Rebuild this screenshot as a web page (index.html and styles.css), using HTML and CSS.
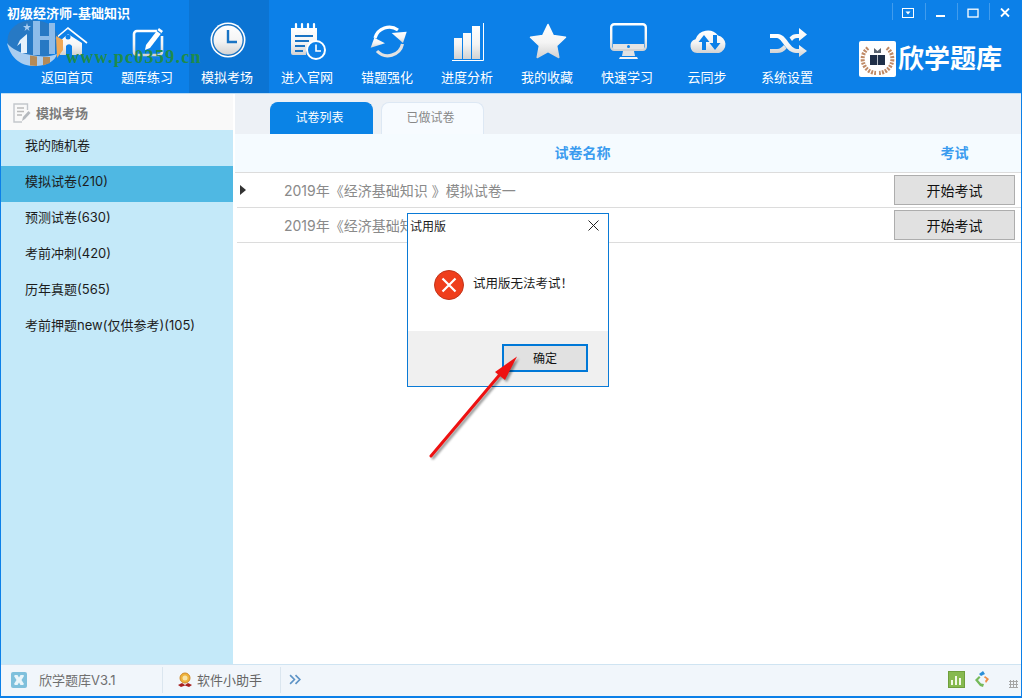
FILE: index.html
```html
<!DOCTYPE html>
<html lang="zh">
<head>
<meta charset="utf-8">
<title>初级经济师-基础知识</title>
<link rel="stylesheet" href="styles.css">
</head>
<body>
<svg class="defs" width="0" height="0" aria-hidden="true">
  <defs>
    <linearGradient id="g" x1="0" y1="0" x2="0" y2="1">
      <stop offset="0" stop-color="#ffffff"/>
      <stop offset="0.55" stop-color="#f4f4f4"/>
      <stop offset="1" stop-color="#d2d2d2"/>
    </linearGradient>
  </defs>
</svg>
<div class="window">
  <header class="top">
    <nav class="tools">
      <a class="tool">
        <svg class="ico" viewBox="0 0 48 40"><path d="M15 33V19L23 12L37 21V33H27V24A3.500 3.500 0 0 0 21 24V33Z" fill="url(#g)"/><path d="M5 21L23 6L42 21" fill="none" stroke="#fff" stroke-width="1.600"/><circle cx="23" cy="15" r="2.500" fill="#0c80e8"/></svg>
        <span>返回首页</span>
      </a>
      <a class="tool">
        <svg class="ico" viewBox="0 0 48 40"><path d="M32 9H12A3 3 0 0 0 9 12V30A3 3 0 0 0 12 33H34A3 3 0 0 0 37 30V14" fill="none" stroke="url(#g)" stroke-width="2.600"/><path d="M21 23L34 6L38 9L25 26L20 28Z" fill="#fff"/><path d="M32 8.500L36 11.500" stroke="#0c80e8" stroke-width="1.200"/></svg>
        <span>题库练习</span>
      </a>
      <a class="tool active">
        <svg class="ico" viewBox="0 0 48 40"><circle cx="23" cy="18" r="17.500" fill="#fff"/><circle cx="23" cy="18" r="15.200" fill="url(#g)" stroke="#1a74c4" stroke-width="1.400"/><path d="M23 8V20H32" fill="none" stroke="#1a74c4" stroke-width="2.400"/></svg>
        <span>模拟考场</span>
      </a>
      <a class="tool">
        <svg class="ico" viewBox="0 0 48 40"><path d="M6 6H32V21A11 11 0 0 0 21 33H8A2 2 0 0 1 6 31Z" fill="url(#g)"/><path d="M11 2V9M17 2V9M23 2V9M29 2V9" stroke="#fff" stroke-width="2.200" stroke-linecap="round"/><path d="M10 14H28M10 19H24M10 24H20M10 29H18" stroke="#1a74c4" stroke-width="2"/><circle cx="31" cy="28" r="9" fill="#0c80e8" stroke="#fff" stroke-width="2"/><path d="M31 22.500V29H36" fill="none" stroke="#fff" stroke-width="1.600"/></svg>
        <span>进入官网</span>
      </a>
      <a class="tool">
        <svg class="ico" viewBox="0 0 48 40"><path d="M10 16A15 15 0 0 1 33 8" fill="none" stroke="#fff" stroke-width="3.200"/><path d="M26.700 11L41.700 9.700L38 21Z" fill="url(#g)"/><path d="M37.500 22A15 15 0 0 1 12 29" fill="none" stroke="#e2e2e2" stroke-width="3.200"/><path d="M5.700 25.700L9.300 15.700L20 21.300Z" fill="url(#g)"/></svg>
        <span>错题强化</span>
      </a>
      <a class="tool">
        <svg class="ico" viewBox="0 0 48 40"><path d="M9 16H17V37H9ZM18 11H26V37H18ZM27 4H35V37H27Z" fill="url(#g)"/><path d="M38.500 1V38.500H7" fill="none" stroke="#fff" stroke-width="1"/></svg>
        <span>进度分析</span>
      </a>
      <a class="tool">
        <svg class="ico" viewBox="0 0 48 40"><path d="M23 2.500L28.300 13.500L40.500 15.200L31.600 23.700L33.800 35.500L23 29.700L12.200 35.500L14.400 23.700L5.500 15.200L17.700 13.500Z" fill="url(#g)" stroke="url(#g)" stroke-width="1.500" stroke-linejoin="round"/></svg>
        <span>我的收藏</span>
      </a>
      <a class="tool">
        <svg class="ico" viewBox="0 0 48 40"><rect x="6.200" y="2.200" width="34.600" height="25.600" rx="3" fill="#0c80e8" stroke="url(#g)" stroke-width="2.400"/><path d="M8 22H39V26A1 1 0 0 1 38 27H9A1 1 0 0 1 8 26Z" fill="#e4e4e4"/><circle cx="23.500" cy="24.500" r="1.500" fill="#0c80e8"/><path d="M18 29H29L30 34H17Z" fill="#e2e2e2"/><path d="M15 35H32L33 37H14Z" fill="#f4f4f4"/></svg>
        <span>快速学习</span>
      </a>
      <a class="tool">
        <svg class="ico" viewBox="0 0 48 40"><path d="M12 31A7 7 0 0 1 10.500 17.300A13 13 0 0 1 33 13.500A9 9 0 0 1 34 31Z" fill="url(#g)"/><path d="M19 13L13.500 20H17V28H21V20H24.500Z" fill="#0c80e8"/><path d="M30 28L35.500 21H32V13H28V21H24.500Z" fill="#0c80e8"/></svg>
        <span>云同步</span>
      </a>
      <a class="tool">
        <svg class="ico" viewBox="0 0 48 40"><path d="M5 12H13C21 12 25 27 32 27H34V23L42 29L34 35V31H31C21 31 17 16 12 16H5Z" fill="url(#g)"/><path d="M5 27H12C15 27 17 25 19 23L21.500 26.500C19 29.500 16 31 12 31H5ZM24.500 15.500C26.500 13 29 12 32 12H34V6L42 12.500L34 19V16H32C30 16 28.500 17 27 19Z" fill="url(#g)"/></svg>
        <span>系统设置</span>
      </a>
    </nav>
    <div class="brand">
      <svg class="brand-ico" viewBox="0 0 37 36">
        <rect width="37" height="36" rx="2" fill="#fff"/>
        <path d="M9 7A14 14 0 0 0 17 32M28 7A14 14 0 0 1 20 32" fill="none" stroke="#c08a66" stroke-width="4" stroke-dasharray="2 1.200"/>
        <path d="M11 14H26V24H11Z" fill="#1f2f48"/>
        <path d="M18.500 14V24" stroke="#dfe4ea" stroke-width="0.800"/>
        <path d="M15 7L18.500 10L22 7V12H15Z" fill="#59636f"/>
      </svg>
      <span class="brand-name">欣学题库</span>
    </div>
    <div class="controls">
      <i class="ctl ctl-first"><svg viewBox="0 0 12 10" class="ctl-ico"><rect x="0.500" y="0.500" width="11" height="9" fill="none" stroke="#fff"/><path d="M3.500 3.500H8.500L6 6.500Z" fill="#fff"/></svg></i>
      <i class="ctl"><svg viewBox="0 0 12 10" class="ctl-ico"><path d="M1 8H10" stroke="#fff" stroke-width="2"/></svg></i>
      <i class="ctl"><svg viewBox="0 0 12 10" class="ctl-ico"><rect x="1" y="1.200" width="10" height="7.800" fill="none" stroke="#fff" stroke-width="1.300"/></svg></i>
      <i class="ctl"><svg viewBox="0 0 12 10" class="ctl-ico"><path d="M2 0.500L10 8.500M10 0.500L2 8.500" stroke="#fff" stroke-width="1.800"/></svg></i>
    </div>
    <div class="app-title">初级经济师-基础知识</div>
    <svg class="wm-logo" viewBox="0 0 56 48">
      <ellipse cx="26" cy="20" rx="25.500" ry="20" fill="#2a78c0" fill-opacity="0.9"/>
      <path d="M49 16L56 20V30L50 38Z" fill="#f0a855"/>
      <path d="M0 23C4 40 16 47 30 46C41 45 48 41 50 34C43 37 34 37 24 35C13 33 5 29 0 23Z" fill="#a9cdf0"/>
      <path d="M23 35.500L30 36.500V46L23 45.500ZM36 37H43V43L36 45.500Z" fill="#b48a57"/>
      <path d="M26 1H33V35H26ZM42 3H48V34H42ZM33 16H42V20H33Z" fill="#8dbcea"/>
      <path d="M13 20L20 14V33H14V23L10 26Z" fill="#e6f2fc"/>
      <path d="M20 3L21 6H24L21.500 8L22.500 11L20 9L17.500 11L18.500 8L16 6H19Z" fill="#a9cdf0"/>
    </svg>
    <div class="wm-text">www.pc0359.cn</div>
  </header>

  <div class="body">
    <aside class="side">
      <div class="side-head">
        <svg class="side-ico" viewBox="0 0 18 20"><path d="M14.500 7V1H1V19H9" fill="none" stroke="#c3c7cc" stroke-width="1.400"/><path d="M4 5H11M4 8.500H11M4 12H9" stroke="#bbb" stroke-width="1.300"/><path d="M9 18L10 14L15.500 8L17.500 10L12 16Z" fill="#b5b9be"/></svg>
        <span>模拟考场</span>
      </div>
      <ul class="side-list">
        <li>我的随机卷</li>
        <li class="on">模拟试卷(210)</li>
        <li>预测试卷(630)</li>
        <li>考前冲刺(420)</li>
        <li>历年真题(565)</li>
        <li>考前押题new(仅供参考)(105)</li>
      </ul>
    </aside>
    <main class="main">
      <div class="tabs">
        <div class="tab tab-on">试卷列表</div>
        <div class="tab">已做试卷</div>
      </div>
      <div class="table">
        <div class="row thead">
          <div class="c-name">试卷名称</div>
          <div class="c-act">考试</div>
        </div>
        <div class="row">
          <div class="c-mark"><i class="tri"></i></div>
          <div class="c-name c-text">2019年《经济基础知识 》模拟试卷一</div>
          <div class="c-act"><button class="start">开始考试</button></div>
        </div>
        <div class="row">
          <div class="c-mark"></div>
          <div class="c-name c-text">2019年《经济基础知识 》模拟试卷二</div>
          <div class="c-act"><button class="start">开始考试</button></div>
        </div>
      </div>
    </main>
  </div>

  <footer class="status">
    <div class="st st-a">
      <svg class="st-ico" viewBox="0 0 16 16"><rect width="16" height="16" rx="2" fill="#7fc0dc"/><path d="M4 3H6.500L8 5.500L9.500 3H12.500L13 4L10.500 8L13 12L12 13H9.500L8 10.500L6.500 13H4L3 12L5.500 8L3 4Z" fill="#eaf5fa"/></svg>
      <span>欣学题库V3.1</span>
    </div>
    <div class="st st-b">
      <svg class="st-med" viewBox="0 0 16 16"><circle cx="8" cy="6" r="5" fill="#eeb43c" stroke="#d08a2a"/><circle cx="8" cy="6" r="2.500" fill="#f9e4a6"/><path d="M1 13L5 11L8 13L11 11L15 13L12 15L8 13.500L4 15Z" fill="#a8201f"/></svg>
      <span>软件小助手</span>
    </div>
    <div class="st st-c">
      <svg class="st-more" viewBox="0 0 12 10"><path d="M1 1L5 5L1 9M6 1L10 5L6 9" fill="none" stroke="#5d93c6" stroke-width="1.500"/></svg>
    </div>
    <div class="st-right">
      <svg class="st-chart" viewBox="0 0 17 17"><rect x="0.500" y="0.500" width="16" height="16" fill="#86b94f" stroke="#6f9f3c"/><path d="M3 14V9H5V14ZM7 14V5H9V14ZM11 14V7H13V14Z" fill="#f2f8e8"/></svg>
      <svg class="st-color" viewBox="0 0 17 17"><path d="M5 3L9 0L11 3L7 5Z" fill="#2b8fd8"/><path d="M11 5L15 8L12 12L11 10L12.500 8L10 6.500Z" fill="#ee8e46"/><path d="M5 5L1 9L6 15L9 16L10 13L7 12.500L4 9L6.500 6.500Z" fill="#75b95a"/></svg>
      <i class="grip"></i>
    </div>
  </footer>

  <div class="dialog">
    <div class="dlg-head">
      <span>试用版</span>
      <svg class="dlg-x" viewBox="0 0 11 11"><path d="M0.500 0.500L10.500 10.500M10.500 0.500L0.500 10.500" stroke="#222" stroke-width="1"/></svg>
    </div>
    <div class="dlg-body">
      <svg class="dlg-err" viewBox="0 0 30 30"><circle cx="15" cy="15" r="14.500" fill="#ef3e1c" stroke="#c1351b"/><path d="M8.500 8.500L21.500 21.500M21.500 8.500L8.500 21.500" stroke="#fff" stroke-width="2.200"/></svg>
      <span>试用版无法考试！</span>
    </div>
    <div class="dlg-foot"><button class="ok">确定</button></div>
  </div>

  <svg class="pointer" viewBox="0 0 110 120">
    <path d="M11 111L82 27" stroke="#ee1111" stroke-width="3" stroke-linecap="round"/>
    <path d="M97 11.500L75 27L85 35Z" fill="#ee1111"/>
  </svg>
</div>
</body>
</html>
```

FILE: styles.css
```css
* { box-sizing: border-box; }
html, body { margin: 0; padding: 0; }
body {
  width: 1022px;
  height: 698px;
  overflow: hidden;
  background: #fff;
  font-family: Inter, "Noto Sans CJK SC", sans-serif;
  font-size: 13px;
}
.defs { position: absolute; }
.window {
  position: relative;
  width: 1022px;
  height: 698px;
  display: flex;
  flex-direction: column;
  border: 1px solid #0c80e8;
  border-top: 0;
  background: #fff;
}

/* header */
.top {
  position: relative;
  flex: 0 0 93px;
  display: flex;
  background: #0c80e8;
  color: #fff;
}
.tools { display: flex; padding-left: 28px; }
.tool {
  width: 80px;
  height: 93px;
  display: flex;
  flex-direction: column;
  align-items: center;
  padding-top: 22px;
  color: #fff;
  font-size: 13px;
  line-height: 18px;
}
.tool span { margin-top: 6px; margin-right: 4px; }
.tool.active { background: #0b74d3; }
.ico { width: 48px; height: 40px; display: block; }

.brand {
  margin-left: auto;
  display: flex;
  align-items: center;
  padding: 41px 19px 16px 0;
  height: 93px;
}
.brand-ico { width: 37px; height: 36px; display: block; }
.brand-name {
  margin-left: 2px;
  font-size: 26px;
  font-weight: 700;
  line-height: 36px;
  white-space: nowrap;
}
.controls {
  position: absolute;
  top: 3px;
  right: 0;
  display: flex;
}
.ctl {
  width: 32px;
  height: 17px;
  padding: 5px 0 0 9px;
  border-left: 1px solid rgba(255, 255, 255, 0.22);
}
.ctl-first { width: 33px; }
.ctl-ico { width: 12px; height: 10px; display: block; }
.app-title {
  position: absolute;
  left: 6px;
  top: 4px;
  font-size: 13px;
  font-weight: 700;
  line-height: 18px;
  color: #fff;
  white-space: nowrap;
}
.wm-logo {
  position: absolute;
  left: 6px;
  top: 20px;
  width: 56px;
  height: 48px;
}
.wm-text {
  position: absolute;
  left: 65px;
  top: 46px;
  font-family: "Liberation Serif", serif;
  font-weight: 700;
  font-size: 18px;
  line-height: 22px;
  letter-spacing: 1.300px;
  color: #1f8b4c;
  white-space: nowrap;
}

/* body */
.body {
  flex: 1;
  display: flex;
  min-height: 0;
  border-top: 1px solid #bcdcf4;
}
.side {
  width: 232px;
  background: #c4e9f9;
  display: flex;
  flex-direction: column;
}
.side-head {
  height: 36px;
  background: #f9f9f9;
  display: flex;
  align-items: center;
  padding: 1px 0 0 12px;
  color: #7b7b7b;
  font-weight: 700;
  font-size: 13px;
}
.side-ico { width: 18px; height: 20px; margin-right: 5px; }
.side-list { list-style: none; margin: 0; padding: 0; }
.side-list li {
  height: 36px;
  line-height: 30px;
  padding-left: 24px;
  color: #1c1c1c;
  font-size: 13px;
}
.side-list li.on { background: #4fb8e3; }

.main {
  flex: 1;
  min-width: 0;
  margin-left: 2px;
  display: flex;
  flex-direction: column;
  background: #fff;
}
.tabs {
  height: 40px;
  background: #edf1f6;
  display: flex;
  padding: 8px 0 0 35px;
  gap: 8px;
}
.tab {
  width: 103px;
  height: 32px;
  border: 1px solid #dde8f4;
  border-bottom: 0;
  border-radius: 8px 8px 0 0;
  background: #f7fbff;
  color: #888;
  font-size: 12px;
  line-height: 30px;
  text-align: center;
  padding-right: 4px;
}
.tab-on {
  background: #0a83e6;
  border-color: #0a83e6;
  color: #fff;
}
.table { flex: 1; }
.row {
  height: 35px;
  display: flex;
  align-items: center;
  margin-left: 2px;
  border-bottom: 1px solid #dcdcdc;
}
.row.thead {
  height: 39px;
  margin-left: 0;
  padding-bottom: 3px;
  background: #f5fbff;
  color: #3a9bef;
  font-size: 14px;
  font-weight: 700;
}
.thead .c-name { flex: 1; text-align: center; padding-left: 42px; }
.c-mark { width: 47px; flex: none; padding-left: 3px; display: flex; align-items: center; }
.tri {
  display: block;
  width: 0;
  height: 0;
  border-left: 6px solid #333;
  border-top: 5px solid transparent;
  border-bottom: 5px solid transparent;
}
.c-name { flex: 1; }
.c-text { color: #8a8a8a; font-size: 14px; white-space: nowrap; }
.c-act {
  width: 133px;
  flex: none;
  text-align: center;
}
.start {
  display: block;
  width: 121px;
  height: 30px;
  margin: 0 0 0 6px;
  padding: 0;
  border: 1px solid #adadad;
  border-radius: 0;
  background: #e1e1e1;
  color: #111;
  font: 14px "Noto Sans CJK SC", sans-serif;
}

/* status bar */
.status {
  flex: 0 0 33px;
  display: flex;
  align-items: center;
  padding-bottom: 2px;
  background: #f1f6fb;
  border-top: 1px solid #cfe4f2;
  border-bottom: 1px solid #0c80e8;
  color: #6f6f6f;
  font-size: 13px;
}
.st {
  height: 26px;
  display: flex;
  align-items: center;
  border-right: 1px solid #dbe6ef;
}
.st-a { width: 162px; padding-left: 10px; }
.st-b { width: 118px; padding-left: 14px; color: #666; }
.st-c { border: 0; padding-left: 8px; }
.st-ico { width: 16px; height: 16px; margin-right: 12px; }
.st-med { width: 16px; height: 16px; margin-right: 4px; }
.st-more { width: 13px; height: 11px; }
.st-right {
  margin-left: auto;
  display: flex;
  align-items: center;
  gap: 9px;
  padding-right: 3px;
}
.st-chart { width: 17px; height: 17px; }
.st-color { width: 17px; height: 17px; margin-right: 9px; }
.grip {
  width: 9px;
  height: 8px;
  margin-top: 9px;
  background: radial-gradient(circle at 1.500px 1.500px, #a5a5a5 1px, transparent 1.200px) 0 0 / 3px 3px;
}

/* dialog */
.dialog {
  position: absolute;
  left: 406px;
  top: 213px;
  width: 202px;
  height: 174px;
  display: flex;
  flex-direction: column;
  background: #fff;
  border: 1px solid #0a7ad6;
  color: #1a1a1a;
  font-size: 12px;
}
.dlg-head {
  height: 24px;
  display: flex;
  align-items: center;
  justify-content: space-between;
  padding: 0 9px 2px 2px;
}
.dlg-x { width: 11px; height: 11px; }
.dlg-body {
  flex: 1;
  display: flex;
  align-items: flex-start;
  padding: 32px 0 0 26px;
}
.dlg-err { width: 30px; height: 30px; margin-right: 9px; }
.dlg-body span { line-height: 27px; font-size: 12.500px; }
.dlg-foot {
  height: 55px;
  background: #f0f0f0;
  padding: 13px 0 0 94px;
}
.ok {
  display: block;
  width: 86px;
  height: 28px;
  padding: 0 0 2px;
  border: 2px solid #0078d7;
  border-radius: 0;
  background: #e1e1e1;
  color: #111;
  font: 12px "Noto Sans CJK SC", sans-serif;
}
.pointer {
  position: absolute;
  left: 419px;
  top: 345px;
  width: 110px;
  height: 120px;
  filter: drop-shadow(2px 2px 1px rgba(0, 0, 0, 0.4));
}
```
